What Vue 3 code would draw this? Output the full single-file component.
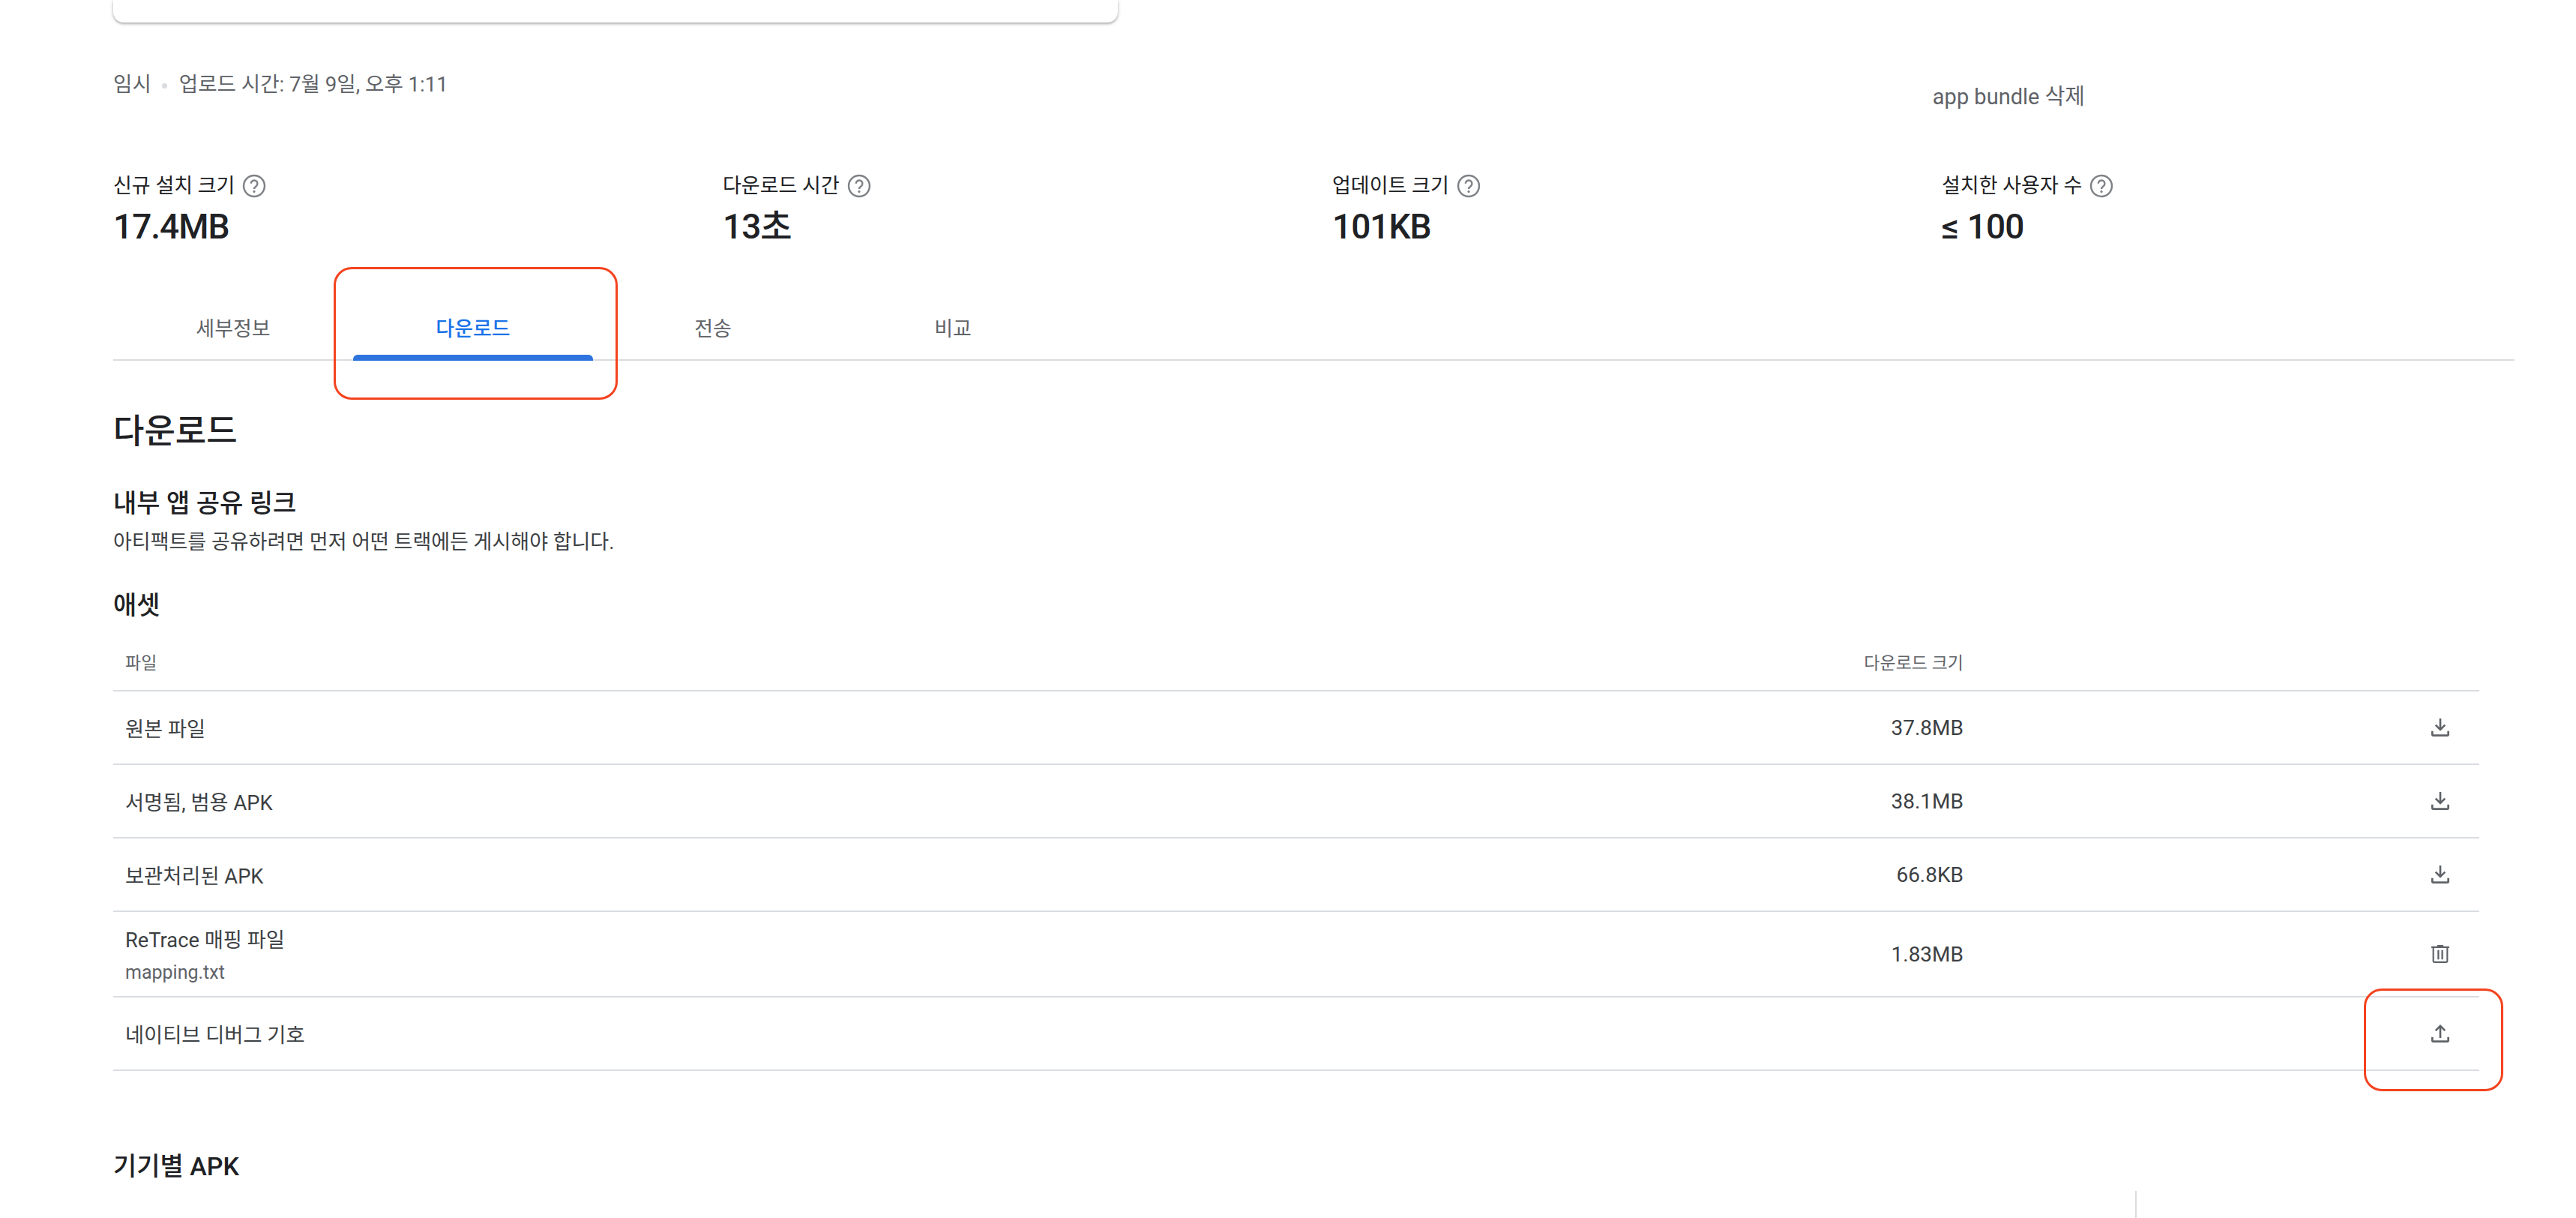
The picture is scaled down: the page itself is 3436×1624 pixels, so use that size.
<script setup>
const stats = [
  { label: '신규 설치 크기', value: '17.4MB' },
  { label: '다운로드 시간', value: '13초' },
  { label: '업데이트 크기', value: '101KB' },
  { label: '설치한 사용자 수', value: '≤ 100' },
]
const tabs = ['세부정보', '다운로드', '전송', '비교']
const rows = [
  { name: '원본 파일', size: '37.8MB', icon: 'download' },
  { name: '서명됨, 범용 APK', size: '38.1MB', icon: 'download' },
  { name: '보관처리된 APK', size: '66.8KB', icon: 'download' },
  { name: 'ReTrace 매핑 파일', sub: 'mapping.txt', size: '1.83MB', icon: 'trash' },
  { name: '네이티브 디버그 기호', size: '', icon: 'upload' },
]
const icons = {
  download: 'M19 15.5V19H5v-3.5H3V19a2 2 0 0 0 2 2h14a2 2 0 0 0 2-2v-3.5h-2zM17.4 10.2 16 8.8l-3 3V3h-2v8.8l-3-3-1.4 1.4L12 15.6z',
  upload: 'M19 15.5V19H5v-3.5H3V19a2 2 0 0 0 2 2h14a2 2 0 0 0 2-2v-3.5h-2zM6.6 8.4l1.4 1.4 3-3V16.5h2V6.8l3 3 1.4-1.4L12 3z',
  trash: 'M15 3H9v1.4H3V6h1.2v13a2 2 0 0 0 2 2h11.6a2 2 0 0 0 2-2V6H21V4.4h-6zM18.2 19.4H5.8V6h12.4zM9.2 8h1.7v9.5H9.2zM13.1 8h1.7v9.5h-1.7z',
}
</script>

<template>
  <div class="page">
    <div class="card"></div>

    <div class="meta">
      <div class="status">
        <span>임시</span>
        <i class="dot"></i>
        <span>업로드 시간: 7월 9일, 오후 1:11</span>
      </div>
      <span class="remove">app bundle 삭제</span>
    </div>

    <div class="stats">
      <div v-for="s in stats" :key="s.label" class="stat">
        <div class="stat-label">
          {{ s.label }}
          <svg class="help" viewBox="0 0 32 32" width="32" height="32" aria-hidden="true">
            <circle cx="16" cy="16" r="14" fill="none" stroke="#5f6368" stroke-width="2.4" />
            <path d="M11.8 12.8a4.3 4.3 0 1 1 6.9 3.4c-1.6 1.2-2.7 2-2.7 3.8" fill="none" stroke="#5f6368" stroke-width="2.4" />
            <circle cx="16" cy="23.4" r="1.6" fill="#5f6368" />
          </svg>
        </div>
        <div class="stat-value">{{ s.value }}</div>
      </div>
    </div>

    <div class="tabs">
      <div v-for="(t, i) in tabs" :key="t" class="tab" :class="{ active: i === 1 }">{{ t }}</div>
    </div>

    <h1>다운로드</h1>
    <h2 class="share">내부 앱 공유 링크</h2>
    <p class="note">아티팩트를 공유하려면 먼저 어떤 트랙에든 게시해야 합니다.</p>
    <h2 class="assets">애셋</h2>

    <div class="table">
      <div class="row head">
        <span class="name">파일</span>
        <span class="size">다운로드 크기</span>
        <span class="action"></span>
      </div>
      <div v-for="r in rows" :key="r.name" class="row" :class="{ tall: r.sub }">
        <div class="name">
          <div>{{ r.name }}</div>
          <div v-if="r.sub" class="sub">{{ r.sub }}</div>
        </div>
        <span class="size">{{ r.size }}</span>
        <span class="action">
          <svg viewBox="0 0 24 24" width="32" height="32" aria-hidden="true"><path :d="icons[r.icon]" fill="#5f6368" fill-rule="evenodd" /></svg>
        </span>
      </div>
    </div>

    <h2 class="devices">기기별 APK</h2>
    <div class="split"></div>

    <div class="mark mark-tab"></div>
    <div class="mark mark-upload"></div>
  </div>
</template>

<style>
html, body { margin: 0; background: #fff; overflow: hidden; }
</style>

<style scoped>
.page {
  position: relative;
  width: 3436px;
  height: 1624px;
  overflow: hidden;
  padding-left: 151px;
  box-sizing: border-box;
  background: #fff;
  font-family: Roboto, "Noto Sans CJK KR", sans-serif;
  color: #202124;
}
.card {
  width: 1340px;
  height: 30px;
  border-radius: 0 0 14px 14px;
  background: #fff;
  box-shadow: 0 2px 3px rgba(60, 64, 67, .35), 0 1px 6px rgba(60, 64, 67, .15);
}
.meta {
  display: flex;
  height: 135px;
  padding-top: 65px;
  font-size: 27.6px;
  line-height: 36px;
  color: #5f6368;
}
.status { display: flex; align-items: center; height: 36px; }
.dot { width: 7px; height: 7px; margin: 2px 16px 0 14px; border-radius: 50%; background: #dadce0; }
.remove { position: relative; top: 16px; margin-left: auto; margin-right: 655px; font-size: 29px; }
.stats { display: flex; height: 177px; }
.stat { width: 813px; }
.stat-label {
  display: flex;
  align-items: center;
  gap: 10px;
  height: 36px;
  font-size: 27px;
  line-height: 36px;
}
.help { opacity: .8; }
.stat-value {
  margin-top: 8px;
  font-size: 46px;
  line-height: 56px;
  font-weight: 500;
  letter-spacing: -1px;
  word-spacing: 1px;
}
.tabs {
  display: flex;
  width: 3203px;
  height: 72px;
  border-bottom: 2px solid #dadce0;
}
.tab {
  position: relative;
  width: 320px;
  text-align: center;
  font-size: 27px;
  line-height: 36px;
  padding-top: 14px;
  color: #5f6368;
}
.tab.active { color: #1a73e8; font-weight: 500; }
.tab.active::after {
  content: '';
  position: absolute;
  left: 0;
  right: 0;
  bottom: -2px;
  height: 8px;
  border-radius: 6px 6px 0 0;
  background: #2f74de;
}
h1 { margin: 65px 0 0; font-size: 45px; line-height: 60px; font-weight: 500; }
h2 { margin: 0; font-size: 34px; line-height: 44px; font-weight: 500; }
.share { margin-top: 43px; }
.note { margin: 12px 0 0; font-size: 27px; line-height: 36px; color: #3c4043; }
.assets { margin-top: 44px; }
.table { width: 3156px; margin-top: 14px; }
.row {
  display: flex;
  align-items: center;
  height: 96px;
  border-bottom: 2px solid #dadce0;
  padding-left: 16px;
  font-size: 27.3px;
  color: #3c4043;
}
.row.head { height: 77px; font-size: 23px; color: #5f6368; }
.row.tall { height: 112px; }
.name { width: 2200px; }
.sub { margin-top: 10px; font-size: 25px; line-height: 32px; color: #5f6368; }
.size { width: 252px; text-align: right; font-size: 28px; }
.head .size { font-size: 23px; }
.action { display: flex; justify-content: flex-end; width: 652px; }
.devices { margin-top: 105px; }
.split { position: absolute; left: 2848px; top: 1588px; bottom: 0; width: 2px; background: #dadce0; }
.mark { position: absolute; box-sizing: border-box; border: 3px solid #f4431f; border-radius: 24px; }
.mark-tab { left: 445px; top: 356px; width: 379px; height: 177px; }
.mark-upload { left: 3153px; top: 1318px; width: 186px; height: 137px; }
</style>
